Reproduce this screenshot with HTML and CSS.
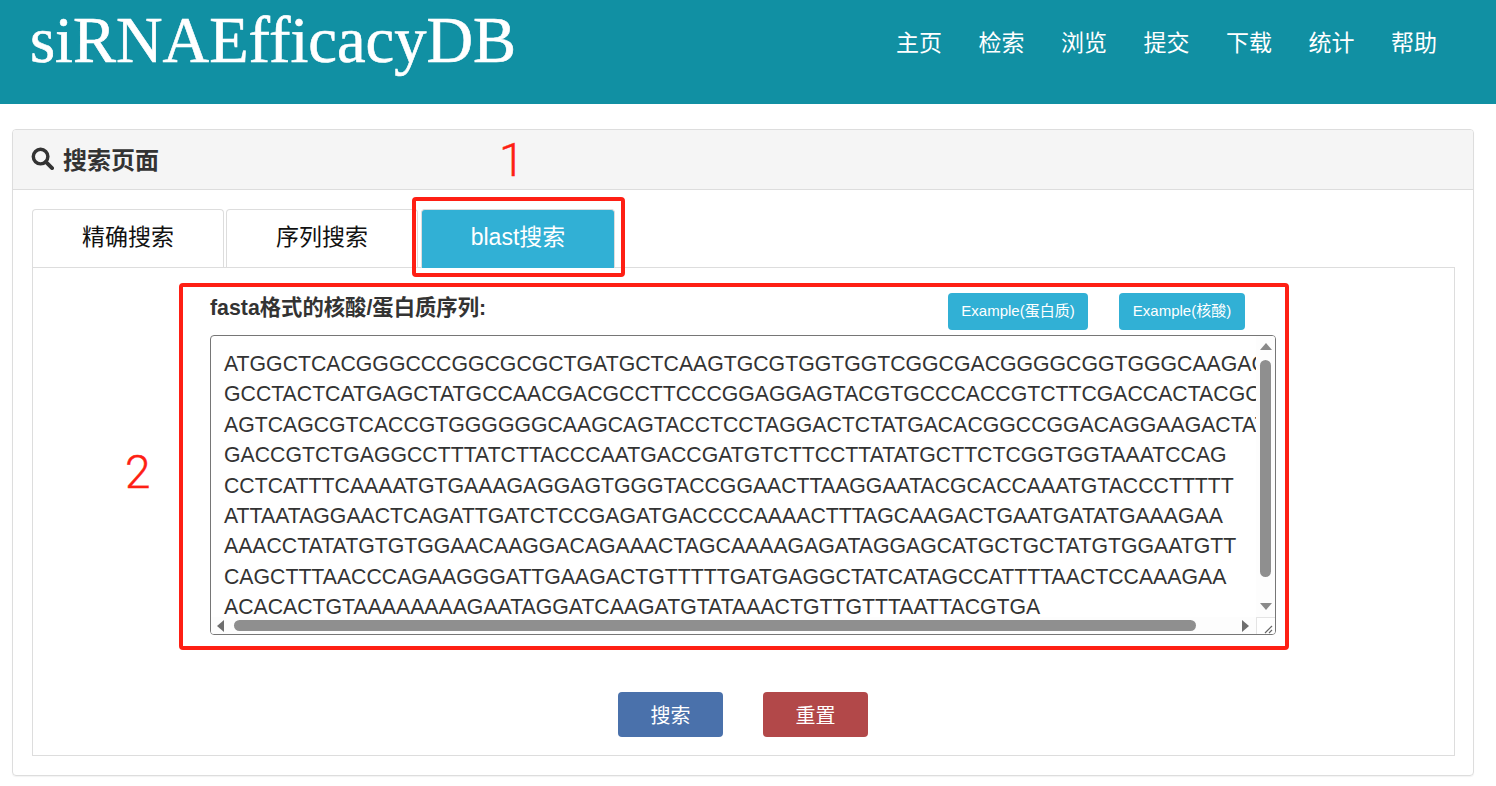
FILE: index.html
```html
<!DOCTYPE html>
<html lang="zh-CN">
<head>
<meta charset="utf-8">
<title>siRNAEfficacyDB</title>
<link rel="stylesheet" href="styles.css">
</head>
<body>
<header class="topbar">
  <div class="brand">siRNAEfficacyDB</div>
  <nav class="nav">
    <a>主页</a><a>检索</a><a>浏览</a><a>提交</a><a>下载</a><a>统计</a><a>帮助</a>
  </nav>
</header>
<main class="panel">
  <div class="panel-head">
    <svg class="search-icon" viewBox="0 0 24 24" width="23" height="23"><circle cx="10" cy="10" r="7.6" fill="none" stroke="#333" stroke-width="3.6"/><path d="M15.5 15.5L22 22" stroke="#333" stroke-width="4" stroke-linecap="round"/></svg>
    <span>搜索页面</span>
  </div>
  <div class="panel-body">
    <div class="tabs">
      <div class="tab">精确搜索</div>
      <div class="tab">序列搜索</div>
      <div class="tab active">blast搜索</div>
    </div>
    <div class="tab-content">
      <div class="form-head">
        <label class="seq-label">fasta格式的核酸/蛋白质序列:</label>
        <div class="examples">
          <button class="ex ex-a">Example(蛋白质)</button>
          <button class="ex ex-b">Example(核酸)</button>
        </div>
      </div>
      <div class="seqbox">
        <div class="seqtext">ATGGCTCACGGGCCCGGCGCGCTGATGCTCAAGTGCGTGGTGGTCGGCGACGGGGCGGTGGGCAAGACCTGCCTGCTCA
GCCTACTCATGAGCTATGCCAACGACGCCTTCCCGGAGGAGTACGTGCCCACCGTCTTCGACCACTACGCAGTCAGCGTC
AGTCAGCGTCACCGTGGGGGGCAAGCAGTACCTCCTAGGACTCTATGACACGGCCGGACAGGAAGACTATGACCGTCTGA
GACCGTCTGAGGCCTTTATCTTACCCAATGACCGATGTCTTCCTTATATGCTTCTCGGTGGTAAATCCAG
CCTCATTTCAAAATGTGAAAGAGGAGTGGGTACCGGAACTTAAGGAATACGCACCAAATGTACCCTTTTT
ATTAATAGGAACTCAGATTGATCTCCGAGATGACCCCAAAACTTTAGCAAGACTGAATGATATGAAAGAA
AAACCTATATGTGTGGAACAAGGACAGAAACTAGCAAAAGAGATAGGAGCATGCTGCTATGTGGAATGTT
CAGCTTTAACCCAGAAGGGATTGAAGACTGTTTTTGATGAGGCTATCATAGCCATTTTAACTCCAAAGAA
ACACACTGTAAAAAAAAGAATAGGATCAAGATGTATAAACTGTTGTTTAATTACGTGA</div>
        <div class="vbar">
          <i class="arrow up"></i>
          <div class="vthumb"></div>
          <i class="arrow down"></i>
        </div>
        <div class="hbar">
          <i class="arrow left"></i>
          <div class="hthumb"></div>
          <i class="arrow right"></i>
        </div>
        <div class="corner">
          <svg viewBox="0 0 17 17" width="17" height="17"><path d="M8 15L15 8M12 15L15 12" stroke="#666" stroke-width="1.2"/></svg>
        </div>
      </div>
      <div class="actions">
        <button class="act primary">搜索</button>
        <button class="act danger">重置</button>
      </div>
    </div>
  </div>
</main>
<div class="mark box1"></div>
<div class="mark box2"></div>
<div class="num n1">1</div>
<div class="num n2">2</div>
</body>
</html>
```
FILE: styles.css
```css
* { box-sizing: border-box; }
html, body { margin: 0; padding: 0; }
body {
  width: 1496px;
  height: 786px;
  overflow: hidden;
  position: relative;
  background: #fff;
  color: #333;
  font-family: "Liberation Sans", "Noto Sans CJK SC", sans-serif;
}
.topbar {
  height: 104px;
  background: #1190a3;
  display: flex;
  justify-content: space-between;
  color: #fff;
}
.brand {
  font-family: "Liberation Serif", serif;
  font-size: 64.5px;
  line-height: 76px;
  padding: 3px 0 0 30px;
  -webkit-text-stroke: 0.6px #fff;
}
.nav {
  display: flex;
  gap: 36.5px;
  padding: 24px 59px 0 0;
  font-family: "Noto Sans CJK SC", sans-serif;
  font-size: 23px;
  line-height: 34px;
}
.panel {
  margin: 25px 22px 0 12px;
  height: 647px;
  border: 1px solid #ddd;
  border-radius: 4px;
  box-shadow: 0 1px 1px rgba(0,0,0,.05);
}
.panel-head {
  height: 60px;
  background: #f5f5f5;
  border-bottom: 1px solid #ddd;
  display: flex;
  align-items: center;
  gap: 9px;
  padding: 0 0 3px 18px;
  font-size: 24px;
  font-weight: 700;
  border-radius: 3px 3px 0 0;
}
.panel-body { padding: 19px 18px 19px 19px; }
.tabs { display: flex; gap: 2px; height: 59px; }
.tab {
  width: 192px;
  height: 59px;
  border: 1px solid #ddd;
  border-bottom: 0;
  border-radius: 4px 4px 0 0;
  text-align: center;
  font-size: 23px;
  line-height: 50px;
  color: #111;
  font-family: "Noto Sans CJK SC", sans-serif;
}
.tab.active {
  width: 194px;
  margin-left: 1px;
  background: #31b0d5;
  border-color: #ddd;
  color: #fff;
  line-height: 55px;
  font-family: "Liberation Sans", "Noto Sans CJK SC", sans-serif;
}
.tab-content {
  margin-top: -1px;
  height: 489px;
  border: 1px solid #ddd;
  padding: 0 178px 0 177px;
}
.form-head {
  height: 67px;
  display: flex;
  justify-content: space-between;
  padding-right: 31px;
}
.seq-label {
  font-size: 21.33px;
  font-weight: 700;
  line-height: 26px;
  padding-top: 27px;
  display: block;
  height: 60px;
}
.examples { display: flex; gap: 31px; padding-top: 25px; }
.ex {
  height: 37px;
  border: 0;
  border-radius: 4px;
  background: #31b0d5;
  color: #fff;
  font-family: "Liberation Sans", "Noto Sans CJK SC", sans-serif;
  font-size: 15px;
  padding: 0 0 5px;
}
.ex-a { width: 140px; }
.ex-b { width: 126px; }
.seqbox {
  width: 1066px;
  height: 300px;
  border: 1px solid #767676;
  border-radius: 4px;
  display: grid;
  grid-template-columns: 1fr 19px;
  grid-template-rows: 1fr 17px;
  overflow: hidden;
  background: #fff;
}
.seqtext {
  padding: 13px 0 0 13px;
  font-size: 21.25px;
  line-height: 30.4px;
  white-space: pre;
  overflow: hidden;
  color: #333;
}
.vbar, .hbar {
  background: #fdfdfd;
  display: flex;
  align-items: center;
}
.vbar { flex-direction: column; padding: 7px 0 7px 0; }
.hbar { padding: 0 5px 0 6px; }
.vthumb { width: 11px; height: 217px; margin: 10px 0 0; background: #8f8f8f; border-radius: 6px; }
.hthumb { width: 962px; height: 11px; margin-left: 10px; background: #8f8f8f; border-radius: 6px; }
.arrow { display: block; width: 0; height: 0; border-style: solid; border-color: transparent; flex: none; }
.arrow.up { border-width: 0 6.5px 7px; border-bottom-color: #8a8a8a; }
.arrow.down { border-width: 7px 6.5px 0; border-top-color: #8a8a8a; margin-top: auto; }
.arrow.left { border-width: 6.5px 7px 6.5px 0; border-right-color: #6e6e6e; }
.arrow.right { border-width: 6.5px 0 6.5px 7px; border-left-color: #6e6e6e; margin-left: auto; margin-right: 2px; }
.corner { background: #fff; border: 1px solid #e4e4e4; border-width: 1px 0 0 1px; }
.corner svg { display: block; }
.actions {
  display: flex;
  justify-content: center;
  gap: 40px;
  margin-top: 57px;
}
.act {
  width: 105px;
  height: 45px;
  border: 0;
  border-radius: 4px;
  color: #fff;
  font-family: "Noto Sans CJK SC", sans-serif;
  font-size: 20px;
  padding: 0;
}
.primary { background: #4a71ab; }
.danger { background: #b24849; }
.mark {
  position: absolute;
  border: 4px solid #fe1f14;
  border-radius: 4px;
  pointer-events: none;
}
.box1 { left: 412px; top: 197px; width: 213px; height: 80px; }
.box2 { left: 179px; top: 283px; width: 1110px; height: 367px; }
.num {
  position: absolute;
  color: #fe1f14;
  font-family: Roboto, sans-serif;
  font-weight: 300;
  font-size: 46px;
  line-height: 50px;
  -webkit-text-stroke: 0.4px #fe1f14;
}
.n1 { left: 499px; top: 135px; }
.n2 { left: 125px; top: 447px; }
```
